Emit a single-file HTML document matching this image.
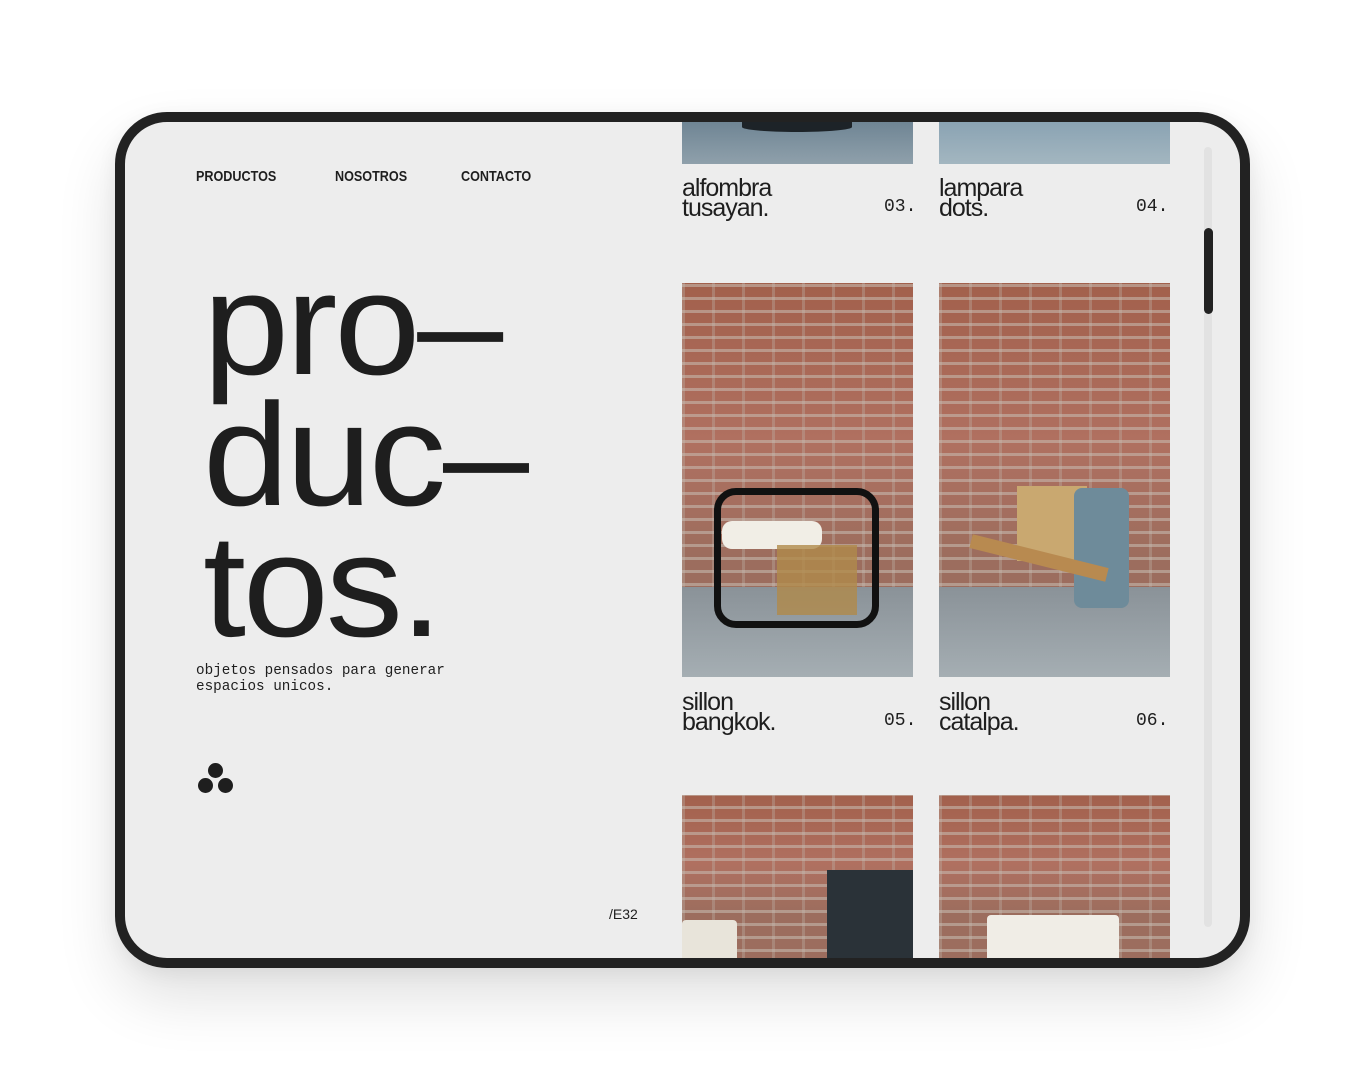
<!DOCTYPE html>
<html><head><meta charset="utf-8"><style>
*{margin:0;padding:0;box-sizing:border-box}
body{width:1364px;height:1080px;background:#fff;position:relative;overflow:hidden;font-family:"Liberation Sans",sans-serif;color:#1e1e1e}
.frame{position:absolute;left:115px;top:112px;width:1135px;height:856px;border:10px solid #222;border-radius:52px;background:#ededed;overflow:hidden;box-shadow:0 30px 60px rgba(0,0,0,0.12),0 5px 20px rgba(0,0,0,0.06)}
.a{position:absolute}
.nav{top:46px;font-size:15px;font-weight:bold;letter-spacing:0px;transform:scaleX(0.84);transform-origin:left}
.big{left:78px;font-size:146px;letter-spacing:-3px;line-height:131px;white-space:nowrap;transform:scaleX(1.06);transform-origin:left}
.sub{left:71px;top:541px;font-family:"Liberation Mono",monospace;font-size:14.3px;line-height:16px}
.dot{width:15px;height:15px;border-radius:50%;background:#1e1e1e}
.img{overflow:hidden}
.brick{background:
repeating-linear-gradient(0deg,rgba(200,190,180,.55) 0 3px,transparent 3px 13px),
repeating-linear-gradient(90deg,rgba(190,180,170,.35) 0 3px,transparent 3px 30px),
linear-gradient(180deg,#a2604c,#b07060 40%,#9c6d5e 70%)}
.floor{position:absolute;left:0;right:0;bottom:0;height:90px;background:linear-gradient(#8a9298,#a5aeb3)}
.cap{font-size:25px;letter-spacing:-1px;line-height:20px}
.num{font-family:"Liberation Mono",monospace;font-size:18px}
</style></head><body>
<div class="frame">
<div class="a nav" style="left:71px">PRODUCTOS</div>
<div class="a nav" style="left:210px">NOSOTROS</div>
<div class="a nav" style="left:336px">CONTACTO</div>
<div class="a big" style="top:136px">pro–</div>
<div class="a big" style="top:267px">duc–</div>
<div class="a big" style="top:398px">tos.</div>
<div class="a sub">objetos pensados para generar<br>espacios unicos.</div>
<div class="a dot" style="left:83px;top:641px"></div>
<div class="a dot" style="left:73px;top:656px"></div>
<div class="a dot" style="left:93px;top:656px"></div>
<div class="a" style="left:484px;top:784px;font-size:14px">/E32</div>

<div class="a img" style="left:557px;top:0;width:231px;height:42px;background:linear-gradient(#6f8594,#8fa0ab)"><div class="a" style="left:60px;top:0;width:110px;height:10px;background:#1d2328;border-radius:0 0 50% 50%"></div></div>
<div class="a img" style="left:814px;top:0;width:231px;height:42px;background:linear-gradient(#8aa3b3,#a3b6c0)"></div>
<div class="a cap" style="left:557px;top:56px">alfombra<br>tusayan.</div>
<div class="a num" style="left:759px;top:75px">03.</div>
<div class="a cap" style="left:814px;top:56px">lampara<br>dots.</div>
<div class="a num" style="left:1011px;top:75px">04.</div>

<div class="a img brick" style="left:557px;top:161px;width:231px;height:394px"><div class="floor"></div>
<div class="a" style="left:32px;top:205px;width:165px;height:140px;border:7px solid #111;border-radius:22px"></div>
<div class="a" style="left:40px;top:238px;width:100px;height:28px;background:#f1eee6;border-radius:10px"></div>
<div class="a" style="left:95px;top:262px;width:80px;height:70px;background:#b08a4a;opacity:.8"></div></div>
<div class="a img brick" style="left:814px;top:161px;width:231px;height:394px"><div class="floor"></div>
<div class="a" style="left:78px;top:203px;width:70px;height:75px;background:#c9a870"></div>
<div class="a" style="left:135px;top:205px;width:55px;height:120px;background:#6e8b9a;border-radius:8px"></div>
<div class="a" style="left:30px;top:268px;width:140px;height:14px;background:#b88a50;transform:rotate(14deg)"></div></div>
<div class="a cap" style="left:557px;top:570px">sillon<br>bangkok.</div>
<div class="a num" style="left:759px;top:589px">05.</div>
<div class="a cap" style="left:814px;top:570px">sillon<br>catalpa.</div>
<div class="a num" style="left:1011px;top:589px">06.</div>

<div class="a img brick" style="left:557px;top:673px;width:231px;height:170px">
<div class="a" style="left:145px;top:75px;width:90px;height:95px;background:#2a3238"></div>
<div class="a" style="left:0;top:125px;width:55px;height:45px;background:#e8e4da;border-radius:4px"></div></div>
<div class="a img brick" style="left:814px;top:673px;width:231px;height:170px">
<div class="a" style="left:48px;top:120px;width:132px;height:50px;background:#f0ede6;border-radius:4px"></div></div>

<div class="a" style="left:1079px;top:25px;width:8px;height:780px;background:#e2e2e2;border-radius:4px"></div>
<div class="a" style="left:1079px;top:106px;width:9px;height:86px;background:#222;border-radius:5px"></div>
</div>
</body></html>
